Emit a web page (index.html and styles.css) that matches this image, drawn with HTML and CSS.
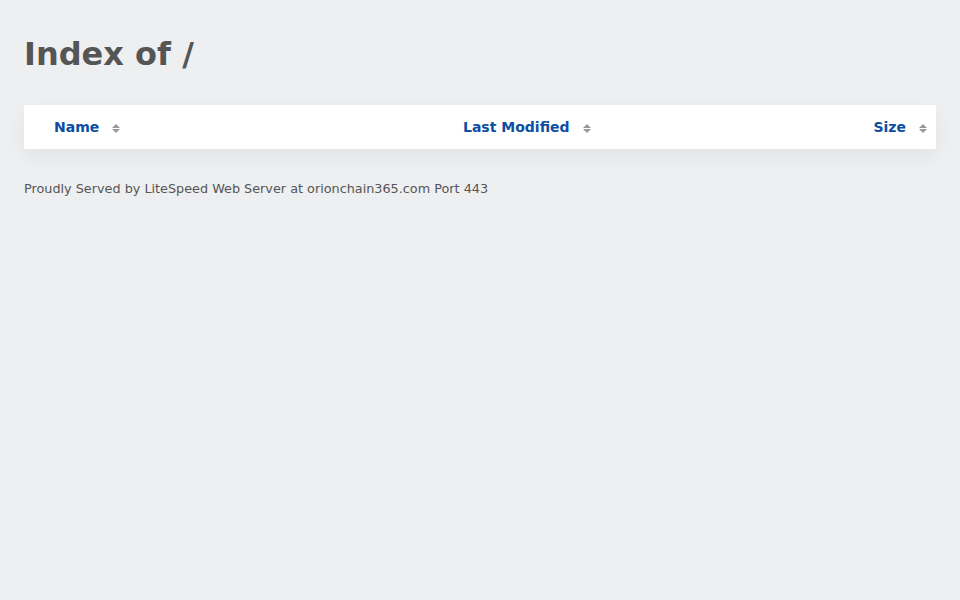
FILE: index.html
```html
<!DOCTYPE html>
<html lang="en">
<head>
    <meta charset="UTF-8">
    <title>Index of /</title>
    <link rel="stylesheet" href="styles.css">
</head>
<body>
    <div class="wrap">
        <h1>Index of /</h1>

        <table class="listing">
            <thead>
                <tr>
                    <th class="col-name"><a href="#">Name</a><span class="sort"></span></th>
                    <th class="col-date"><a href="#">Last Modified</a><span class="sort"></span></th>
                    <th class="col-size"><a href="#">Size</a><span class="sort"></span></th>
                </tr>
            </thead>
            <tbody></tbody>
        </table>

        <div class="footer">Proudly Served by LiteSpeed Web Server at orionchain365.com Port 443</div>
    </div>
</body>
</html>
```

FILE: styles.css
```css
* {
    margin: 0;
    padding: 0;
    box-sizing: border-box;
}

body {
    background: #eeeff1;
    color: #555;
    font-family: 'DejaVu Sans', sans-serif;
    min-height: 100vh;
}

.wrap {
    padding: 24px;
}

h1 {
    font-size: 32px;
    font-weight: bold;
    line-height: 60px;
    color: #555;
}

.listing {
    width: 100%;
    margin-top: 21px;
    border-collapse: collapse;
    background: #fff;
    box-shadow: 0 8px 20px rgba(0, 0, 0, 0.05);
}

.listing th {
    height: 44px;
    padding-left: 30px;
    font-size: 14px;
    font-weight: bold;
    text-align: left;
    white-space: nowrap;
}

.listing th a {
    color: #0b4ea2;
    text-decoration: none;
}

.col-name {
    width: 409px;
}

.col-size {
    text-align: right !important;
    padding-right: 9px;
}

.sort {
    display: inline-block;
    position: relative;
    width: 8px;
    height: 9px;
    margin-left: 13px;
    vertical-align: -1px;
}

.sort::before,
.sort::after {
    content: '';
    position: absolute;
    left: 0;
    border-left: 4px solid transparent;
    border-right: 4px solid transparent;
}

.sort::before {
    top: 0;
    border-bottom: 4px solid #999;
}

.sort::after {
    bottom: 0;
    border-top: 4px solid #999;
}

.footer {
    margin-top: 32px;
    font-size: 12.8px;
    color: #555;
}
```
